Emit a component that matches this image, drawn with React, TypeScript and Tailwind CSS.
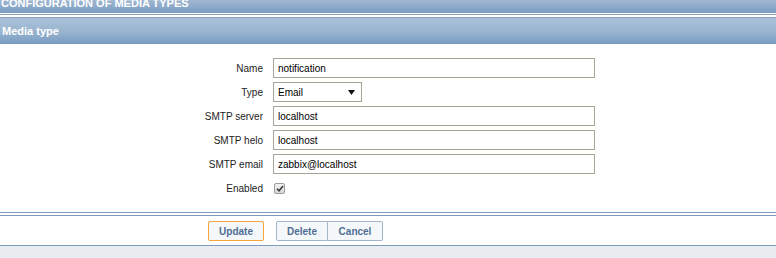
import React from 'react'

const font = { fontFamily: '"Liberation Sans", Arial, sans-serif' }

function Field({ label, children }: { label: string; children: React.ReactNode }) {
  return (
    <>
      <div className="flex h-[20px] items-center justify-end text-[10px] text-[#222]">{label}</div>
      <div className="flex h-[20px] items-center">{children}</div>
    </>
  )
}

function TextInput({ value }: { value: string }) {
  return (
    <div className="box-border flex h-[20px] w-[322px] items-center border border-[#a6a696] bg-white pl-[4px] text-[10px] text-black">
      {value}
    </div>
  )
}

export default function App() {
  return (
    <div className="flex min-h-[258px] w-[776px] flex-col bg-white" style={font}>
      {/* page title, top cut off */}
      <div className="h-[13px] overflow-hidden bg-linear-to-b from-[#a0b7d0] to-[#7a9dc2]">
        <div className="mt-[-2px] pl-[1px] text-[11px] leading-[11px] font-bold text-white">
          CONFIGURATION OF MEDIA TYPES
        </div>
      </div>
      <div className="h-px bg-white" />
      <div className="h-px bg-[#8b9fb6]" />
      <div className="h-[2px] bg-white" />
      <div className="h-px bg-[#8b9fb6]" />

      {/* form header */}
      <div className="flex h-[26px] items-center bg-linear-to-b from-[#aac1d9] via-[#9bb5d0] to-[#789cc2] pl-[2px] text-[11px] font-bold text-white">
        Media type
      </div>

      {/* form body */}
      <div className="grid grid-cols-[263px_auto] gap-x-[10px] gap-y-[4px] pt-[14px] pb-[14px]">
        <Field label="Name">
          <TextInput value="notification" />
        </Field>
        <Field label="Type">
          <div className="box-border flex h-[20px] w-[89px] items-center justify-between border border-[#a6a696] bg-white pr-[6px] pl-[4px] text-[10px] text-black">
            <span>Email</span>
            <svg width="7" height="5" viewBox="0 0 7 5">
              <path d="M0 0h7L3.5 5z" fill="#111" />
            </svg>
          </div>
        </Field>
        <Field label="SMTP server">
          <TextInput value="localhost" />
        </Field>
        <Field label="SMTP helo">
          <TextInput value="localhost" />
        </Field>
        <Field label="SMTP email">
          <TextInput value="zabbix@localhost" />
        </Field>
        <Field label="Enabled">
          <div className="ml-[1px] box-border flex h-[11px] w-[11px] items-center justify-center rounded-[2px] border border-[#9c9c9c] bg-linear-to-b from-[#f4f4f4] to-[#d8d8d8]">
            <svg width="8" height="7" viewBox="0 0 8 7">
              <path d="M1 3.8 3 5.8 7 1" fill="none" stroke="#3a3a3a" strokeWidth="1.6" />
            </svg>
          </div>
        </Field>
      </div>

      {/* footer */}
      <div className="h-px bg-[#7f9cbc]" />
      <div className="h-[2px] bg-white" />
      <div className="h-px bg-[#7f9cbc]" />
      <div className="flex pt-[5px] pb-[4px] pl-[208px]">
        <button className="box-border h-[20px] w-[56px] rounded-[2px] border border-[#f4a43a] bg-[#f5f8fb] text-[10px] font-bold text-[#4f6d92]">
          Update
        </button>
        <div className="ml-[12px] flex">
          <button className="box-border h-[20px] w-[52px] rounded-l-[2px] border border-[#a3b6cc] bg-[#f5f8fb] text-[10px] font-bold text-[#4f6d92]">
            Delete
          </button>
          <button className="box-border h-[20px] w-[55px] rounded-r-[2px] border border-l-0 border-[#a3b6cc] bg-[#f5f8fb] text-[10px] font-bold text-[#4f6d92]">
            Cancel
          </button>
        </div>
      </div>
      <div className="h-px bg-[#7f9cbc]" />
      <div className="flex-1 bg-[#e9edf1]" />
    </div>
  )
}
